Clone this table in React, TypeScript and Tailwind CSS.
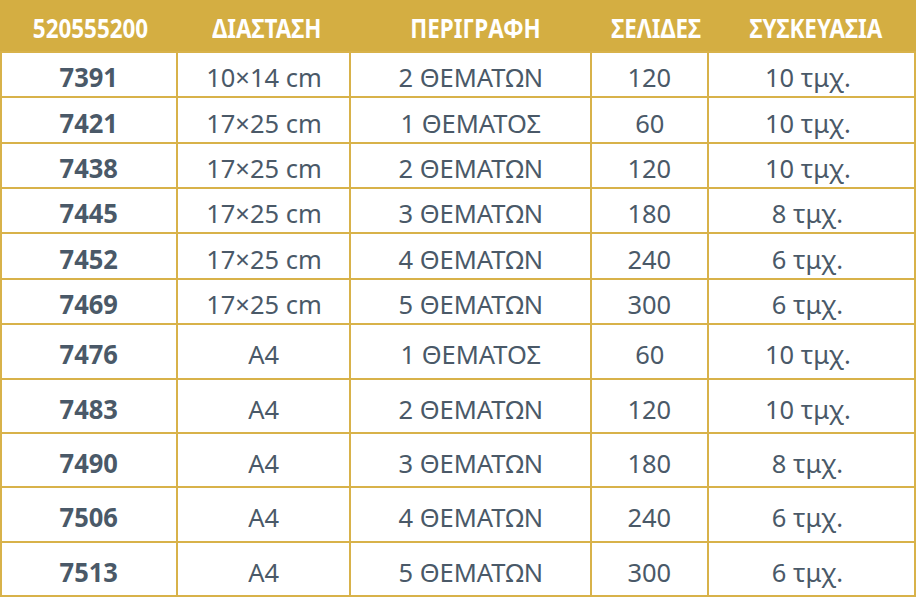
import React from "react";

const rows: [string, string, string, string, string, number][] = [
  ["7391", "10×14 cm", "2 ΘΕΜΑΤΩΝ", "120", "10 τμχ.", 45],
  ["7421", "17×25 cm", "1 ΘΕΜΑΤΟΣ", "60", "10 τμχ.", 46],
  ["7438", "17×25 cm", "2 ΘΕΜΑΤΩΝ", "120", "10 τμχ.", 45],
  ["7445", "17×25 cm", "3 ΘΕΜΑΤΩΝ", "180", "8 τμχ.", 45],
  ["7452", "17×25 cm", "4 ΘΕΜΑΤΩΝ", "240", "6 τμχ.", 46],
  ["7469", "17×25 cm", "5 ΘΕΜΑΤΩΝ", "300", "6 τμχ.", 45],
  ["7476", "A4", "1 ΘΕΜΑΤΟΣ", "60", "10 τμχ.", 55],
  ["7483", "A4", "2 ΘΕΜΑΤΩΝ", "120", "10 τμχ.", 54],
  ["7490", "A4", "3 ΘΕΜΑΤΩΝ", "180", "8 τμχ.", 54],
  ["7506", "A4", "4 ΘΕΜΑΤΩΝ", "240", "6 τμχ.", 55],
  ["7513", "A4", "5 ΘΕΜΑΤΩΝ", "300", "6 τμχ.", 54],
];

const widths = ["w-[176px]", "w-[173px]", "w-[241px]", "w-[117px]", "w-[197px]"];
const headers = ["520555200", "ΔΙΑΣΤΑΣΗ", "ΠΕΡΙΓΡΑΦΗ", "ΣΕΛΙΔΕΣ", "ΣΥΣΚΕΥΑΣΙΑ"];

function Row({ r }: { r: (typeof rows)[number] }) {
  const cells = r.slice(0, 5) as string[];
  return (
    <div className="flex border-t-2 border-[#d8b24a]" style={{ height: r[5] }}>
      {cells.map((c, i) => (
        <div
          key={i}
          className={`${widths[i]} shrink-0 ${i < 4 ? "border-r-2 border-[#d8b24a]" : ""} flex items-center justify-center pt-[5px]`}
        >
          <span
            className={`inline-block leading-none text-[#4a5968] whitespace-nowrap ${i === 0 ? "text-[26px] font-bold scale-x-[0.98]" : "text-[26px] font-normal scale-x-[0.98]"}`}
          >
            {c}
          </span>
        </div>
      ))}
    </div>
  );
}

export default function App() {
  return (
    <div className="w-[918px] h-[597px] bg-white" style={{ fontFamily: '"Noto Sans", "Open Sans", sans-serif' }}>
      <div className="w-[916px] border-l-2 border-r-2 border-b-2 border-[#d8b24a]">
        <div className="flex h-[51px] bg-[#d4ae42] -mx-[2px] px-[2px]">
          {headers.map((h, i) => (
            <div key={i} className={`${widths[i]} shrink-0 ${i < 4 ? "mr-[2px]" : ""} flex items-center justify-center pt-[3px]`}>
              <span className="inline-block text-[27px] font-bold leading-none text-white scale-x-[0.83] whitespace-nowrap">
                {h}
              </span>
            </div>
          ))}
        </div>
        {rows.map((r) => (
          <Row key={r[0]} r={r} />
        ))}
      </div>
    </div>
  );
}
